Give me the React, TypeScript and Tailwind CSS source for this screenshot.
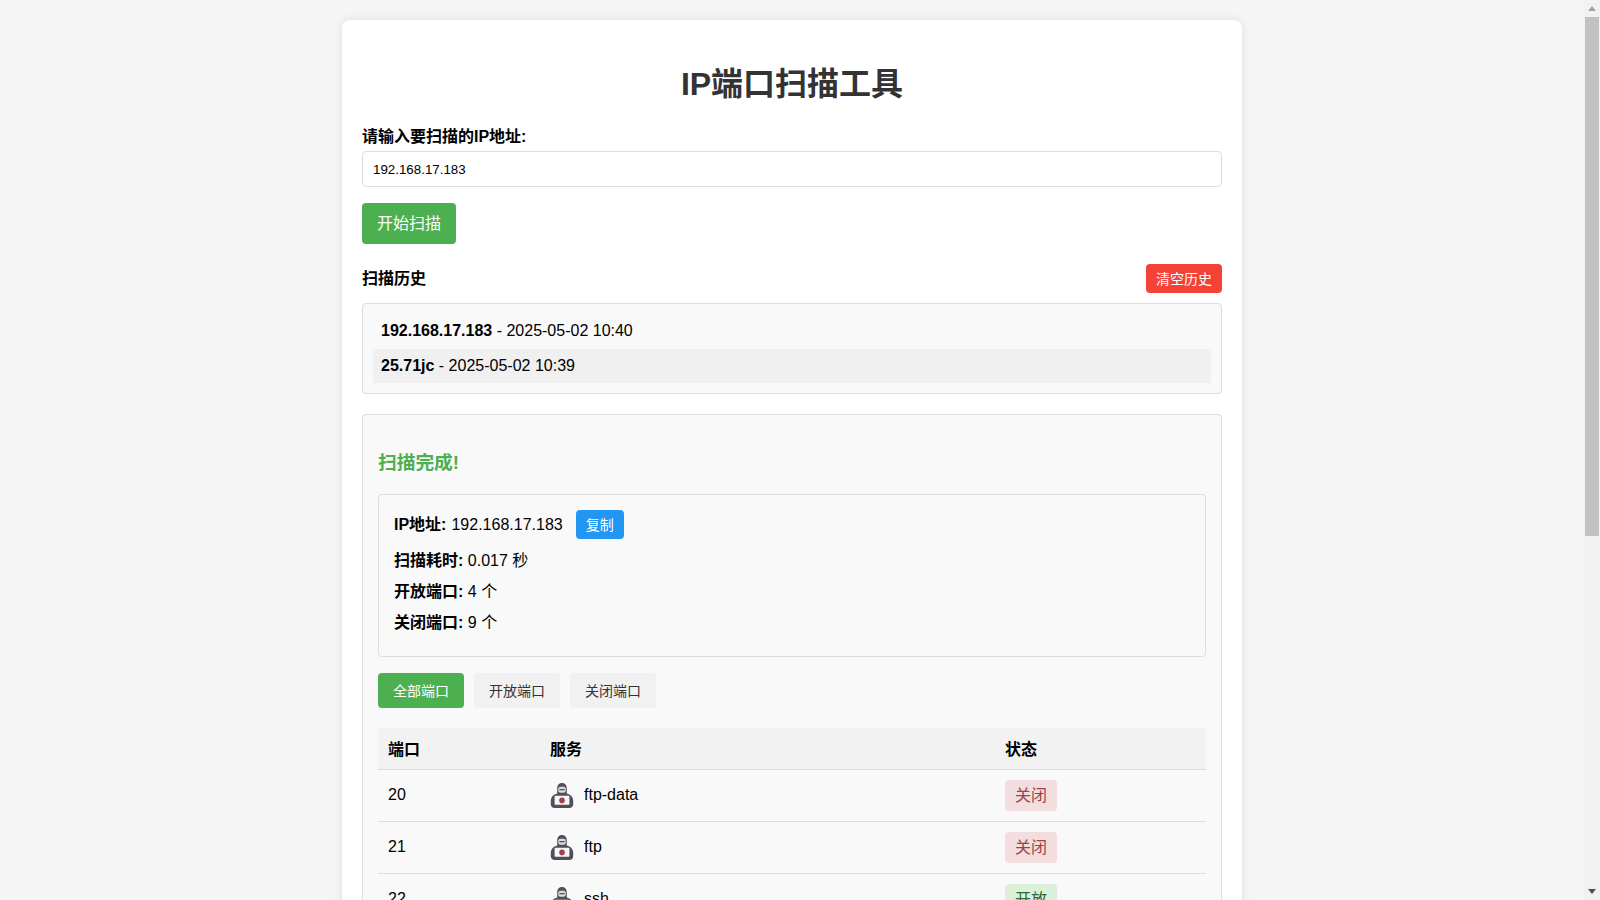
import React from 'react'

const font = 'font-["Liberation_Sans","Noto_Sans_CJK_SC",sans-serif]'

const ports = [
	{ port: 20, service: 'ftp-data', open: false },
	{ port: 21, service: 'ftp', open: false },
	{ port: 22, service: 'ssh', open: true },
]

const HackerIcon = () => (
	<svg viewBox="0 0 24 25" className="w-6 h-[25px] shrink-0">
		<path
			d="M12 0C9 0 7.2 2.2 7.2 5.4v5.2C3.2 11.6 1 14 .8 17.4v3.8C.8 23.4 2.4 25 4.6 25h14.8c2.2 0 3.8-1.6 3.8-3.8v-3.8C23 14 20.8 11.6 16.8 10.6V5.4C16.8 2.2 15 0 12 0z"
			fill="#50505c"
		/>
		<rect x="8.2" y="3.8" width="7.6" height="6" rx="2.4" fill="#dcdce0" />
		<rect x="9.4" y="6" width="5.2" height="1.3" fill="#50505c" />
		<rect x="4.6" y="12.8" width="14.8" height="9" rx="0.8" fill="#f6f6f8" />
		<circle cx="12" cy="17.4" r="2.8" fill="#a3404f" />
	</svg>
)

const StatusBadge = ({ open }: { open: boolean }) => (
	<span
		className={`inline-block rounded px-[10px] py-[5px] text-base leading-[21px] ${
			open ? 'bg-[#dcefd9] text-[#2e6b3a]' : 'bg-[#f2dddf] text-[#a0404a]'
		}`}
	>
		{open ? '开放' : '关闭'}
	</span>
)

const ScrollBar = () => (
	<div className="w-[16px] h-full shrink-0 bg-[#f1f1f1] flex flex-col">
		<div className="h-[17px] flex items-center justify-center">
			<div className="w-0 h-0 border-x-[4px] border-x-transparent border-b-[5px] border-b-[#a3a3a3]" />
		</div>
		<div className="h-[519px] mx-[1px] bg-[#c1c1c1]" />
		<div className="flex-1" />
		<div className="h-[17px] flex items-center justify-center">
			<div className="w-0 h-0 border-x-[4px] border-x-transparent border-t-[5px] border-t-[#505050]" />
		</div>
	</div>
)

export default function App() {
	return (
		<div className={`${font} h-screen flex overflow-hidden bg-[#f5f5f5] text-black`}>
			<div className="flex-1 min-w-0 h-full overflow-hidden">
				<div className="w-[900px] mx-auto mt-5 bg-white rounded-lg shadow-[0_0_10px_rgba(0,0,0,0.1)] p-5">
					<h1 className="text-[32px] leading-[37px] font-bold text-center text-[#333] mt-[26px] mb-[25px]">
						IP端口扫描工具
					</h1>

					<label className="block text-base leading-[18px] font-bold mb-[5px]">
						请输入要扫描的IP地址:
					</label>
					<input
						readOnly
						value="192.168.17.183"
						className="block w-full h-9 px-[10px] border border-[#ddd] rounded text-[13.33px] bg-white text-black outline-none"
					/>

					<button className="block mt-4 h-[41px] px-[15px] bg-[#4caf50] text-white text-base rounded">
						开始扫描
					</button>

					<div className="flex items-center justify-between mt-5 mb-[10px]">
						<h3 className="text-base font-bold">扫描历史</h3>
						<button className="h-[29px] px-[10px] bg-[#f44336] text-white text-sm rounded">
							清空历史
						</button>
					</div>

					<div className="border border-[#ddd] rounded bg-[#f9f9f9] p-[10px]">
						<div className="h-[34.5px] px-2 flex items-center text-base">
							<b>192.168.17.183</b>
							<span className="whitespace-pre"> - 2025-05-02 10:40</span>
						</div>
						<div className="h-[34.5px] px-2 flex items-center text-base bg-[#f0f0f0]">
							<b>25.71jc</b>
							<span className="whitespace-pre"> - 2025-05-02 10:39</span>
						</div>
					</div>

					<div className="mt-5 border border-[#ddd] rounded bg-[#f9f9f9] p-[15px]">
						<h3 className="mt-[18px] mb-4 text-[18.72px] leading-[30px] font-bold text-[#4caf50]">
							扫描完成!
						</h3>

						<div className="border border-[#ddd] rounded px-[15px] pt-[15px] pb-6 text-base leading-[18px]">
							<div className="flex items-center">
								<b>IP地址:</b>
								<span className="ml-[5px]">192.168.17.183</span>
								<button className="ml-[13px] h-[29px] px-[10px] bg-[#2196f3] text-white text-sm rounded">
									复制
								</button>
							</div>
							<p className="mt-[13px]">
								<b>扫描耗时:</b> 0.017 秒
							</p>
							<p className="mt-[13px]">
								<b>开放端口:</b> 4 个
							</p>
							<p className="mt-[13px]">
								<b>关闭端口:</b> 9 个
							</p>
						</div>

						<div className="flex gap-[10px] mt-4">
							<button className="h-[35px] w-[86px] bg-[#4caf50] text-white text-sm rounded">
								全部端口
							</button>
							<button className="h-[35px] w-[86px] bg-[#f1f1f1] text-[#333] text-sm rounded">
								开放端口
							</button>
							<button className="h-[35px] w-[86px] bg-[#f1f1f1] text-[#333] text-sm rounded">
								关闭端口
							</button>
						</div>

						<table className="w-full mt-5 border-collapse text-base table-fixed">
							<thead>
								<tr className="bg-[#f2f2f2] border-b border-[#ddd]">
									<th className="w-[162px] h-[41px] px-[10px] pt-[3px] text-left font-bold">端口</th>
									<th className="w-[455px] px-[10px] pt-[3px] text-left font-bold">服务</th>
									<th className="px-[10px] pt-[3px] text-left font-bold">状态</th>
								</tr>
							</thead>
							<tbody>
								{ports.map(row => (
									<tr key={row.port} className="border-b border-[#ddd]">
										<td className="h-[52px] px-[10px]">{row.port}</td>
										<td className="px-[10px]">
											<div className="flex items-center gap-[10px]">
												<HackerIcon />
												<span>{row.service}</span>
											</div>
										</td>
										<td className="px-[10px]">
											<StatusBadge open={row.open} />
										</td>
									</tr>
								))}
							</tbody>
						</table>
					</div>
				</div>
			</div>
			<ScrollBar />
		</div>
	)
}
